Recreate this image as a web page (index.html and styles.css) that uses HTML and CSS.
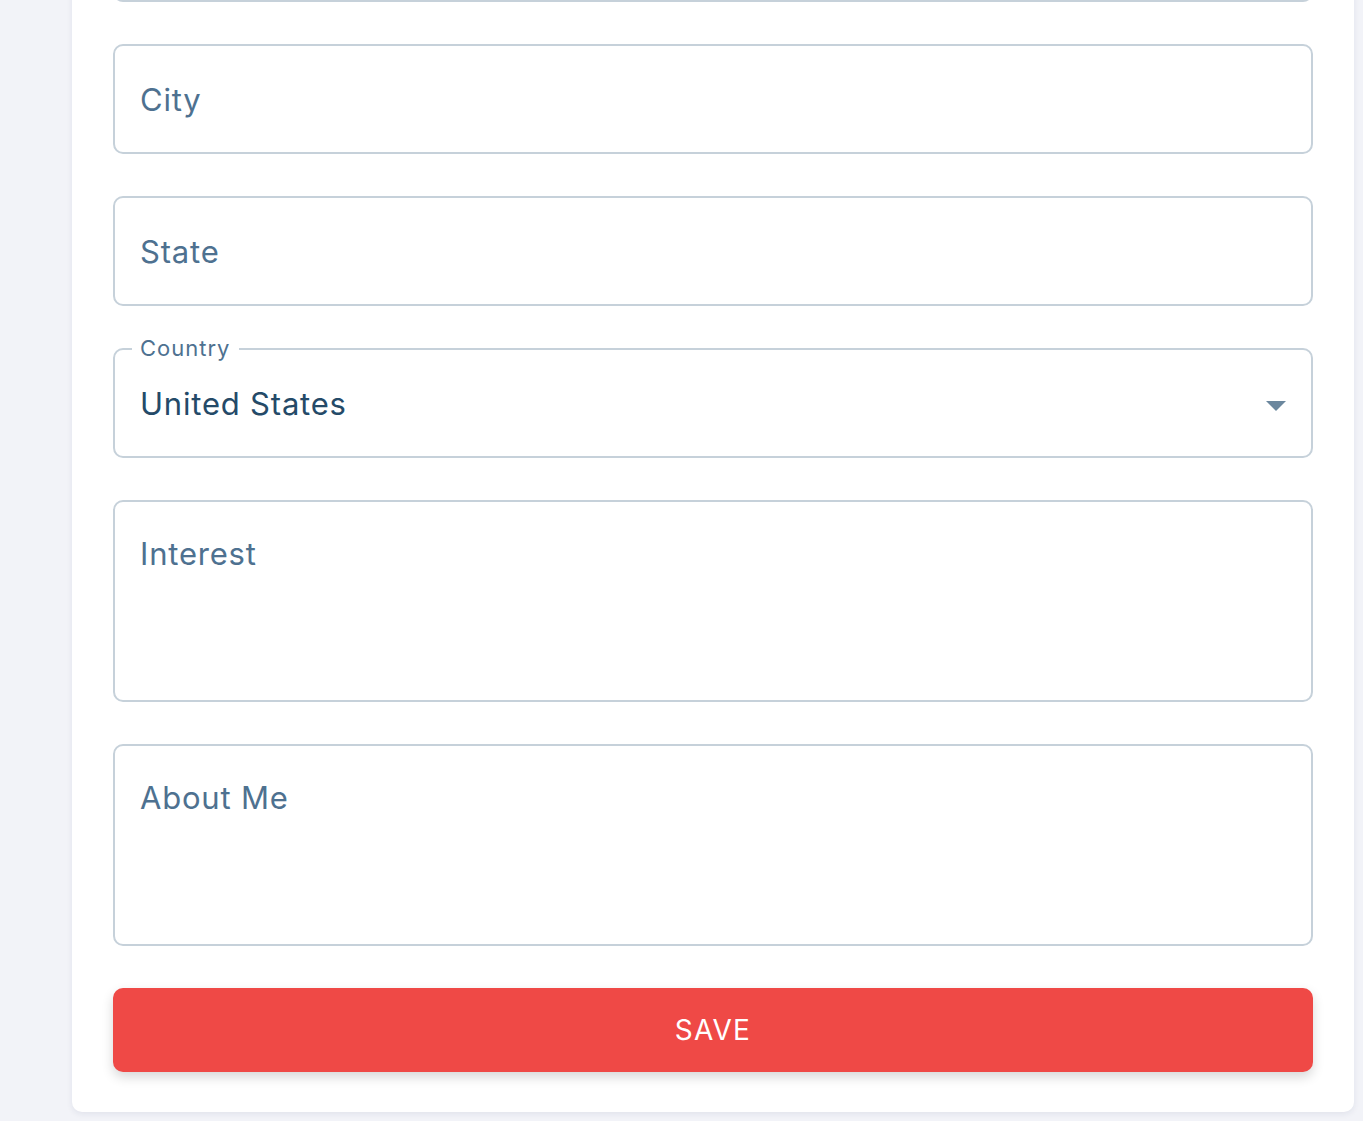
FILE: index.html
```html
<!DOCTYPE html>
<html lang="en">
<head>
<meta charset="utf-8">
<title>Profile form</title>
<link rel="stylesheet" href="styles.css">
</head>
<body>
<main class="page">
  <section class="card">
    <form class="form">
      <div class="field"><input class="input" type="text" placeholder="Postal Code"></div>
      <div class="field"><input class="input" type="text" placeholder="City"></div>
      <div class="field"><input class="input" type="text" placeholder="State"></div>
      <div class="field select-field">
        <span class="legend">Country</span>
        <span class="select-value">United States</span>
        <svg class="caret" width="20" height="10" viewBox="0 0 20 10"><path d="M0 0 H20 L10 10 Z" fill="#6b879e"/></svg>
      </div>
      <div class="field area"><textarea class="input textarea" placeholder="Interest"></textarea></div>
      <div class="field area"><textarea class="input textarea" placeholder="About Me"></textarea></div>
      <button class="save" type="button">SAVE</button>
    </form>
  </section>
</main>
</body>
</html>
```
FILE: styles.css
```css
* { box-sizing: border-box; }
html, body { margin: 0; height: 100%; }
body {
  background: #f2f3f8;
  font-family: "Inter", "Noto Sans", sans-serif;
  overflow: hidden;
}
.page {
  height: 1121px;
  display: flex;
  flex-direction: column;
  justify-content: flex-end;
  padding: 0 9px 9px 72px;
  overflow: hidden;
}
.card {
  flex-shrink: 0;
  background: #fff;
  border-radius: 10px;
  box-shadow: 0 2px 6px rgba(30, 40, 90, 0.08);
  padding: 40px 41px 40px 41px;
}
.form {
  display: flex;
  flex-direction: column;
  gap: 42px;
}
.field {
  flex-shrink: 0;
  height: 110px;
  border: 2px solid #c6d1da;
  border-radius: 10px;
  display: flex;
  align-items: center;
}
.field.area { height: 202px; align-items: stretch; }
.input {
  border: 0;
  outline: 0;
  background: transparent;
  width: 100%;
  height: 100%;
  padding: 0 25px;
  font: inherit;
  font-size: 31px;
  letter-spacing: 0.8px;
  color: #264d6b;
}
.input::placeholder { color: #4e7190; opacity: 1; }
.textarea {
  resize: none;
  padding-top: 32px;
  line-height: 40px;
}
.select-field {
  position: relative;
  padding: 0 25px;
  justify-content: space-between;
}
.legend {
  position: absolute;
  left: 17px;
  top: -16px;
  background: #fff;
  font-size: 22px;
  letter-spacing: 1px;
  line-height: 28px;
  color: #4e7190;
  padding: 0 9px 0 8px;
}
.select-value {
  font-size: 31px;
  letter-spacing: 0.8px;
  color: #244a68;
}
.caret { margin-right: 0; margin-top: 6px; }
.save {
  flex-shrink: 0;
  height: 84px;
  border: 0;
  border-radius: 10px;
  background: #ef4946;
  color: #fff;
  font: inherit;
  font-size: 28px;
  letter-spacing: 1.2px;
  box-shadow: 0 5px 12px rgba(0, 0, 0, 0.16);
  cursor: pointer;
}
```
